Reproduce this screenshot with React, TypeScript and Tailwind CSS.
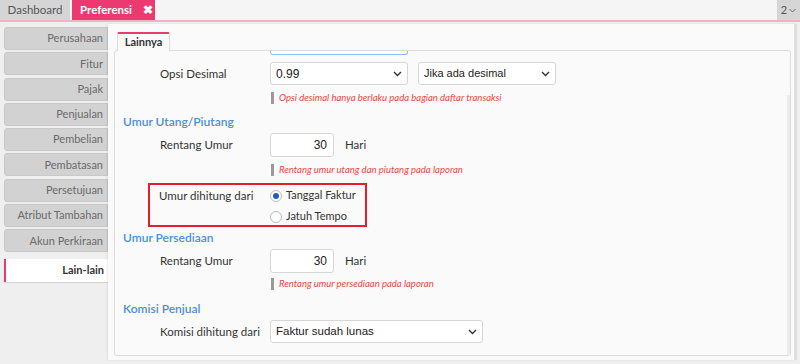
import React from "react";

const menu = [
  "Perusahaan",
  "Fitur",
  "Pajak",
  "Penjualan",
  "Pembelian",
  "Pembatasan",
  "Persetujuan",
  "Atribut Tambahan",
  "Akun Perkiraan",
];

const Chevron: React.FC = () => (
  <svg width="9" height="6" viewBox="0 0 9 6" fill="none" stroke="#333" strokeWidth="1.4">
    <path d="M1 1l3.5 3.5L8 1" />
  </svg>
);

const Hint: React.FC<{ text: string }> = ({ text }) => (
  <div className="flex items-center h-[14px] pl-[156px]">
    <div className="w-[3px] h-[12px] bg-[#9a9a9a]" />
    <span className="ml-[5px] text-[9.5px] leading-[14px] italic text-[#e8473f]">{text}</span>
  </div>
);

const Heading: React.FC<{ text: string }> = ({ text }) => (
  <div className="pl-[8px] h-[16px] text-[12px] leading-[16px] font-semibold text-[#4a8fdb]">{text}</div>
);

const NumInput: React.FC = () => (
  <div className="flex items-center">
    <div className="w-[64px] h-[24px] bg-white border border-[#d6d6d6] rounded-[3px] flex items-center justify-end pr-[6px] text-[12px] text-[#222] font-['Liberation_Sans',sans-serif]">
      30
    </div>
    <span className="ml-[11px] text-[11.5px] text-[#333]">Hari</span>
  </div>
);

const App: React.FC = () => {
  return (
    <div className="w-[800px] h-[364px] bg-[#efefef] flex flex-col overflow-hidden font-['Lato',sans-serif]">
      {/* top tabs */}
      <div className="h-[22px] flex bg-[#f5f5f5] border-b-2 border-[#f6b0c4]">
        <div className="w-[70px] h-[20px] bg-[#d5d5d5] text-[#555] text-[11.5px] flex items-center justify-center">
          Dashboard
        </div>
        <div className="ml-[2px] w-[83px] h-[20px] bg-[#ea3a6f] text-white text-[11.5px] font-bold flex items-center pl-[8px]">
          Preferensi
          <span className="ml-[11px] text-[12px] leading-none">✖</span>
        </div>
        <div className="flex-1" />
        <div className="w-[23px] h-[20px] bg-[#d6d6d6] text-[#555] text-[11px] flex items-center justify-center gap-[2px]">
          2
          <svg width="7" height="5" viewBox="0 0 7 5" fill="none" stroke="#666" strokeWidth="1">
            <path d="M0.5 1l3 3 3-3" />
          </svg>
        </div>
      </div>

      <div className="flex flex-1 pt-[2px]">
        {/* sidebar */}
        <div className="w-[108px] pl-[4px] pt-[3px] flex flex-col">
          {menu.map((m) => (
            <div
              key={m}
              className="h-[23px] mb-[2.3px] bg-[#d2d2d2] border border-[#c8c8c8] rounded-l-[3px] flex items-center justify-end pr-[4px] text-[11px] text-[#6a6a6a]"
            >
              {m}
            </div>
          ))}
          <div className="mt-[4px] h-[23px] bg-white border-l-2 border-[#ea3a6f] flex items-center justify-end pr-[4px] text-[11px] font-bold text-[#333] shadow-[0_1px_1px_rgba(0,0,0,0.1)]">
            Lain-lain
          </div>
        </div>

        {/* main panel */}
        <div className="w-[689px] h-[336px] bg-[#fafafa] border-r-[3px] border-[#dedede] shadow-[-1px_0_2px_rgba(0,0,0,0.08)] flex flex-col pl-[6px] pr-[3px]">
          <div className="h-[26px] flex items-end pl-[3px]">
            <div className="w-[53px] h-[19px] bg-[#fafafa] border border-[#dcdcdc] border-t-2 border-t-[#ea3a6f] border-b-0 rounded-t-[2px] text-[11px] font-bold text-[#333] flex items-center justify-center -mb-px relative">
              Lainnya
            </div>
          </div>
          <div className="w-[677px] h-[306px] border border-[#dcdcdc] rounded-[3px] bg-[#fafafa] flex overflow-hidden">
            <div className="flex-1 flex flex-col">
              {/* clipped focused input */}
              <div className="ml-[155px] w-[138px] h-[4px] border-x border-b border-[#8ec0f5] rounded-b-[3px] bg-white" />

              {/* Opsi Desimal */}
              <div className="mt-[7px] h-[23px] flex items-center">
                <div className="w-[155px] pl-[45px] text-[11.5px] text-[#333]">Opsi Desimal</div>
                <div className="w-[138px] h-[23px] bg-white border border-[#d6d6d6] rounded-[3px] flex items-center justify-between px-[5px] text-[12px] text-[#222] font-['Liberation_Sans',sans-serif]">
                  0.99
                  <Chevron />
                </div>
                <div className="ml-[10px] w-[138px] h-[23px] bg-white border border-[#d6d6d6] rounded-[3px] flex items-center justify-between px-[5px] text-[11px] text-[#222] font-['Liberation_Sans',sans-serif]">
                  Jika ada desimal
                  <Chevron />
                </div>
              </div>
              <div className="mt-[6px]">
                <Hint text="Opsi desimal hanya berlaku pada bagian daftar transaksi" />
              </div>

              <div className="mt-[9px]">
                <Heading text="Umur Utang/Piutang" />
              </div>

              <div className="mt-[3px] h-[24px] flex items-center">
                <div className="w-[155px] pl-[45px] text-[11.5px] text-[#333]">Rentang Umur</div>
                <NumInput />
              </div>
              <div className="mt-[6px]">
                <Hint text="Rentang umur utang dan piutang pada laporan" />
              </div>

              {/* red highlight box */}
              <div className="mt-[6px] ml-[33px] w-[219px] h-[44px] border-2 border-[#e3202a] flex pt-[3px]">
                <div className="w-[120px] pl-[9px] text-[11.5px] text-[#333] leading-[15px]">Umur dihitung dari</div>
                <div className="flex flex-col gap-[6px]">
                  <div className="flex items-center gap-[4px] h-[15px]">
                    <div className="w-[12px] h-[12px] rounded-full border border-[#bcbcbc] bg-white flex items-center justify-center">
                      <div className="w-[6px] h-[6px] rounded-full bg-[#1f5fb8]" />
                    </div>
                    <span className="text-[11px] text-[#333]">Tanggal Faktur</span>
                  </div>
                  <div className="flex items-center gap-[4px] h-[15px]">
                    <div className="w-[12px] h-[12px] rounded-full border border-[#bcbcbc] bg-white" />
                    <span className="text-[11px] text-[#333]">Jatuh Tempo</span>
                  </div>
                </div>
              </div>

              <div className="mt-[3px]">
                <Heading text="Umur Persediaan" />
              </div>
              <div className="mt-[3px] h-[24px] flex items-center">
                <div className="w-[155px] pl-[45px] text-[11.5px] text-[#333]">Rentang Umur</div>
                <NumInput />
              </div>
              <div className="mt-[4px]">
                <Hint text="Rentang umur persediaan pada laporan" />
              </div>

              <div className="mt-[10px]">
                <Heading text="Komisi Penjual" />
              </div>
              <div className="mt-[3px] h-[23px] flex items-center">
                <div className="w-[155px] pl-[45px] text-[11.5px] text-[#333]">Komisi dihitung dari</div>
                <div className="w-[213px] h-[23px] bg-white border border-[#d6d6d6] rounded-[3px] flex items-center justify-between px-[5px] text-[11.5px] text-[#222] font-['Liberation_Sans',sans-serif]">
                  Faktur sudah lunas
                  <Chevron />
                </div>
              </div>
            </div>
            {/* scrollbar track */}
            <div className="w-[3px] mt-[44px] bg-[#ececec]" />
          </div>
        </div>
      </div>
    </div>
  );
};

export default App;
